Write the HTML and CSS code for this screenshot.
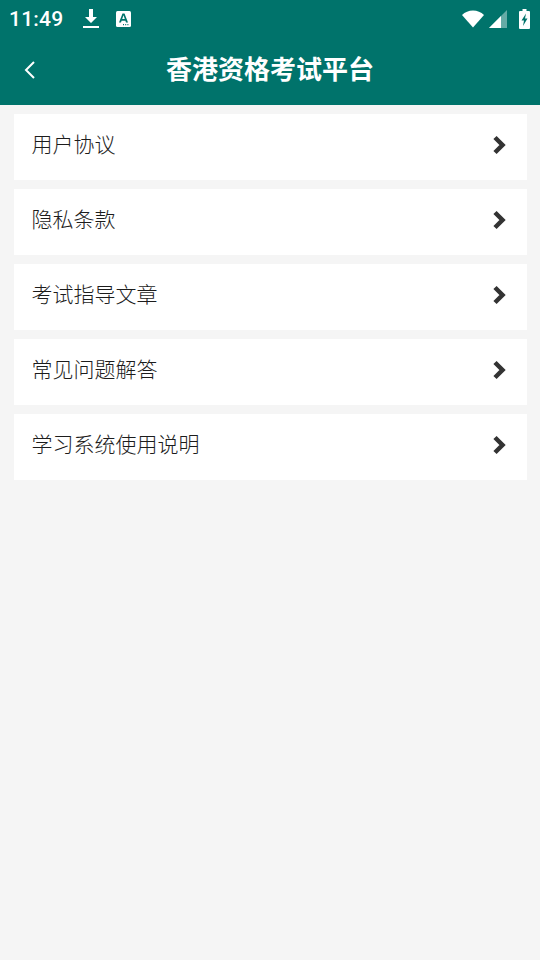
FILE: index.html
```html
<!DOCTYPE html>
<html lang="zh-CN">
<head>
    <meta charset="UTF-8">
    <meta name="viewport" content="width=device-width, initial-scale=1.0">
    <title>香港资格考试平台</title>
    <link rel="stylesheet" href="styles.css">
</head>
<body>
    <header class="header">
        <div class="status-bar">
            <span class="time">11:49</span>
            <svg class="icon-download" width="18" height="22" viewBox="0 0 18 22">
                <path d="M7 1h4v8h4l-6 6-6-6h4z" fill="#fff"/>
                <rect x="1" y="18" width="16" height="2" fill="#fff"/>
            </svg>
            <svg class="icon-app" width="16" height="16" viewBox="0 0 16 16">
                <rect width="15" height="16" rx="1.5" fill="#fff"/>
                <path d="M3 11.500 6.500 2.500h2l3.500 9h-2l-.6-1.800H5.600L5 11.500zM6.200 8h2.600L7.500 4.300z" fill="#00736b"/>
                <path d="M7 13h1v1.200H7zM9.200 13h1v1.200h-1zM11.400 13h1v1.200h-1z" fill="#00736b"/>
            </svg>
            <div class="status-right">
                <svg class="icon-wifi" width="22" height="18" viewBox="0 0 22 18">
                    <path d="M0 5C3 2 6.800.5 11 .5S19 2 22 5L11 17.500z" fill="#fff"/>
                </svg>
                <svg class="icon-signal" width="18" height="18" viewBox="0 0 18 18">
                    <path d="M18 0v18H0z" fill="#fff" fill-opacity="0.4"/>
                    <path d="M12 6v12H0z" fill="#fff"/>
                </svg>
                <svg class="icon-battery" width="11" height="20" viewBox="0 0 11 20">
                    <path fill-rule="evenodd" fill="#fff" d="M3.500 0h4v2h2.500a1 1 0 0 1 1 1v16a1 1 0 0 1-1 1H1a1 1 0 0 1-1-1V3a1 1 0 0 1 1-1h2.500zM7 4.500 2.500 11.500h2.500L4 17l4.500-7.500H6z"/>
                </svg>
            </div>
        </div>
        <div class="nav-bar">
            <svg class="back" width="14" height="20" viewBox="0 0 14 20">
                <path d="M11 2 3 10l8 8" fill="none" stroke="#fff" stroke-width="2"/>
            </svg>
            <h1 class="title">香港资格考试平台</h1>
        </div>
    </header>

    <main class="list">
        <div class="item"><span class="item-text">用户协议</span><svg class="chevron" width="16" height="20" viewBox="0 0 16 20"><path d="M3 2.500 10.500 10 3 17.500" fill="none" stroke="#333" stroke-width="4.500"/></svg></div>
        <div class="item"><span class="item-text">隐私条款</span><svg class="chevron" width="16" height="20" viewBox="0 0 16 20"><path d="M3 2.500 10.500 10 3 17.500" fill="none" stroke="#333" stroke-width="4.500"/></svg></div>
        <div class="item"><span class="item-text">考试指导文章</span><svg class="chevron" width="16" height="20" viewBox="0 0 16 20"><path d="M3 2.500 10.500 10 3 17.500" fill="none" stroke="#333" stroke-width="4.500"/></svg></div>
        <div class="item"><span class="item-text">常见问题解答</span><svg class="chevron" width="16" height="20" viewBox="0 0 16 20"><path d="M3 2.500 10.500 10 3 17.500" fill="none" stroke="#333" stroke-width="4.500"/></svg></div>
        <div class="item"><span class="item-text">学习系统使用说明</span><svg class="chevron" width="16" height="20" viewBox="0 0 16 20"><path d="M3 2.500 10.500 10 3 17.500" fill="none" stroke="#333" stroke-width="4.500"/></svg></div>
    </main>
</body>
</html>
```

FILE: styles.css
```css
body {
    margin: 0;
    height: 960px;
    overflow: hidden;
    background-color: #f5f5f5;
    font-family: Roboto, "Noto Sans CJK SC", sans-serif;
}

.header {
    height: 105px;
    background-color: #00736b;
    color: white;
}

.status-bar {
    display: flex;
    align-items: center;
    height: 37px;
    padding: 0 10px 0 9px;
}

.time {
    font-size: 21px;
    font-weight: 500;
    letter-spacing: 0.2px;
}

.icon-download {
    margin-left: 19px;
}

.icon-app {
    margin-left: 16px;
}

.status-right {
    display: flex;
    align-items: center;
    margin-left: auto;
}

.icon-signal {
    margin-left: 5px;
}

.icon-battery {
    margin-left: 12px;
}

.nav-bar {
    display: flex;
    align-items: center;
    justify-content: center;
    position: relative;
    height: 68px;
}

.back {
    position: absolute;
    left: 23px;
    top: 23px;
}

.title {
    margin: 0;
    font-size: 26px;
    font-weight: 700;
    line-height: 1.2;
}

.list {
    display: flex;
    flex-direction: column;
    gap: 9px;
    padding: 9px 13px 0 14px;
}

.item {
    display: flex;
    align-items: center;
    justify-content: space-between;
    height: 66px;
    padding: 0 18px 5px 17.5px;
    box-sizing: border-box;
    background-color: white;
    color: #1c1c1c;
    font-size: 21px;
    font-weight: 300;
}

.item-text {
    margin-bottom: 3px;
}

.chevron {
    margin-right: 1px;
}
```
